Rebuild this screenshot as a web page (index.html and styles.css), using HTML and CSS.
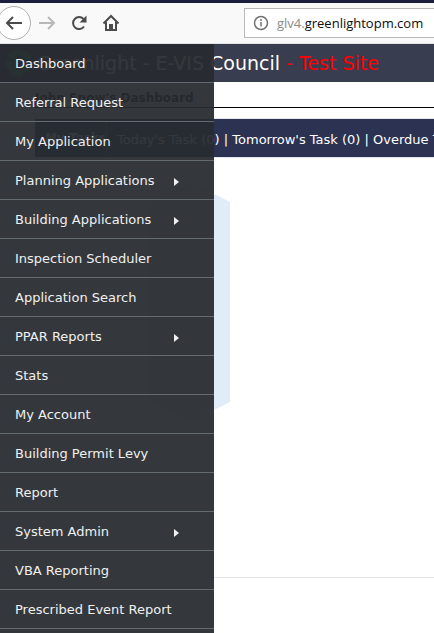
FILE: index.html
```html
<!DOCTYPE html>
<html lang="en">
<head>
    <meta charset="UTF-8">
    <meta name="viewport" content="width=device-width, initial-scale=1.0">
    <title>Greenlight - Dashboard</title>
    <link rel="stylesheet" href="styles.css">
</head>
<body>
    <div class="toolbar">
        <button type="button" class="nav-button back" aria-label="Back">
            <svg width="18" height="18" viewBox="0 0 18 18"><path d="M17 9H2M8 3L2 9l6 6"/></svg>
        </button>
        <button type="button" class="nav-button forward" aria-label="Forward" disabled>
            <svg width="18" height="18" viewBox="0 0 18 18"><path d="M1 9h15M10 3l6 6-6 6"/></svg>
        </button>
        <button type="button" class="nav-button" aria-label="Reload">
            <svg width="18" height="18" viewBox="0 0 18 18"><path d="M14 12.5A6 6 0 1 1 13.5 5"/><path class="solid" d="M16.5 1.5v7h-7z"/></svg>
        </button>
        <button type="button" class="nav-button" aria-label="Home">
            <svg width="18" height="18" viewBox="0 0 18 18"><path d="M1.5 9.5L9 2l7.500 7.500M4 8v8h10V8"/><path class="solid" d="M7 10h4v6H7z"/></svg>
        </button>
        <div class="url">
            <svg width="16" height="16" viewBox="0 0 16 16"><circle cx="8" cy="8" r="6.500"/><path d="M8 7v4.500M8 4v2"/></svg>
            <span class="address"><span class="subdomain">glv4.</span>greenlightopm.com</span>
        </div>
    </div>

    <div class="page">
        <header class="header">
            <svg class="logo" width="28" height="30" viewBox="0 0 28 30">
                <path d="M13 1Q4 1 3 9l6 3q0-6 8-8zM16 2q9 1 10 8l-7 2q-1-5-6-6zM27 13q0 8-7 12l-4-5q5-2 5-7zM18 28q-8 2-13-4l4-6q3 5 9 4zM3 22q-4-5-1-11l7 4q-2 3 0 6z"/>
            </svg>
            <h1>Greenlight - E-VIS Council <span class="test">- Test Site</span></h1>
        </header>
        <main>
            <h2>John Snow's Dashboard</h2>
            <div class="tasks">
                <b>My Tasks</b>
                <span class="counts">Today's Task (0) | Tomorrow's Task (0) | Overdue Task (0)</span>
            </div>
            <div class="hexagon"></div>
        </main>
        <footer></footer>

        <nav class="menu">
            <a href="#">Dashboard</a>
            <a href="#">Referral Request</a>
            <a href="#">My Application</a>
            <a href="#" class="sub">Planning Applications</a>
            <a href="#" class="sub">Building Applications</a>
            <a href="#">Inspection Scheduler</a>
            <a href="#">Application Search</a>
            <a href="#" class="sub">PPAR Reports</a>
            <a href="#">Stats</a>
            <a href="#">My Account</a>
            <a href="#">Building Permit Levy</a>
            <a href="#">Report</a>
            <a href="#" class="sub">System Admin</a>
            <a href="#">VBA Reporting</a>
            <a href="#">Prescribed Event Report</a>
        </nav>
    </div>
</body>
</html>
```
FILE: styles.css
```css
* {
    box-sizing: border-box;
}
body {
    margin: 0;
    height: 100vh;
    display: flex;
    flex-direction: column;
    overflow: hidden;
    font-family: Verdana, "DejaVu Sans", sans-serif;
    font-size: 13px;
    background-color: white;
}

/* browser bar */
.toolbar {
    display: flex;
    align-items: center;
    height: 44px;
    flex: none;
    border-top: 3px solid #1d1d3d;
    border-bottom: 1px solid #dfe3e6;
    background-color: #f9f9fa;
}
.nav-button {
    display: flex;
    align-items: center;
    justify-content: center;
    flex: none;
    width: 32px;
    height: 32px;
    padding: 0;
    border: none;
    background: none;
}
.nav-button svg {
    fill: none;
    stroke: #4c4c4e;
    stroke-width: 2;
}
.nav-button .solid {
    fill: #4c4c4e;
    stroke: none;
}
.back {
    width: 34px;
    height: 34px;
    margin-left: -3px;
    border: 1px solid #b1b1b1;
    border-radius: 50%;
    background-color: white;
}
.forward svg {
    stroke: #b8b8b9;
}
.url {
    display: flex;
    align-items: center;
    flex: 1;
    height: 30px;
    margin-left: 117px;
    padding-left: 8px;
    border: 1px solid #b8b8b8;
    border-right: none;
    background-color: white;
}
.url svg {
    flex: none;
    fill: none;
    stroke: #737373;
    stroke-width: 1.5;
}
.address {
    margin-left: 8px;
    font: 13px "Open Sans", sans-serif;
    color: #0c0c0d;
}
.subdomain {
    color: #8a8a8b;
}

/* page */
.page {
    position: relative;
    flex: 1;
    display: flex;
    flex-direction: column;
    white-space: nowrap;
}
.header {
    display: flex;
    align-items: center;
    height: 38px;
    padding-left: 5px;
    background-color: #383d50;
    color: white;
}
.logo {
    fill: #3f8f5a;
}
h1 {
    margin: 0 0 0 4px;
    font-size: 19px;
    font-weight: normal;
}
.test {
    color: red;
}
main {
    flex: 1;
    padding-left: 35px;
}
h2 {
    margin: 0;
    padding-top: 8px;
    height: 26px;
    border-bottom: 1px solid black;
    font-size: 12px;
    line-height: 16px;
}
.tasks {
    display: flex;
    align-items: center;
    height: 40px;
    margin-top: 10px;
    padding-left: 10px;
    border-top: 1px solid #e3e6ea;
    border-bottom: 1px solid #e3e6ea;
    background-color: #2c3252;
    color: white;
    overflow: hidden;
}
.tasks b {
    width: 65px;
    font-size: 12px;
}
.counts {
    padding: 8px 0 6px 10px;
    border-left: 1px solid #7a8098;
}
.hexagon {
    width: 80px;
    height: 240px;
    margin: 24px 0 0 115px;
    background-color: #e0ecf8;
    clip-path: polygon(50% 0, 100% 20px, 100% 220px, 50% 100%, 0 220px, 0 20px);
}
footer {
    height: 56px;
    border-top: 1px solid #e5e5e5;
}

/* slide out menu */
.menu {
    position: absolute;
    top: 0;
    left: 0;
    bottom: 0;
    width: 214px;
    background-color: rgba(39, 44, 48, 0.94);
}
.menu a {
    display: flex;
    align-items: center;
    justify-content: space-between;
    height: 39px;
    padding: 0 35px 0 15px;
    border-bottom: 1px solid #626b71;
    color: #f0f0f0;
    text-decoration: none;
}
.sub::after {
    content: "";
    margin-top: 4px;
    border: 4px solid transparent;
    border-left: 5px solid #f0f0f0;
    border-right: none;
}
```
